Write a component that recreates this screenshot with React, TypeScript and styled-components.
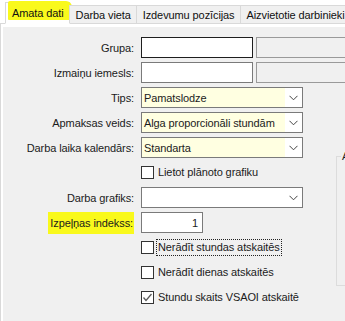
import React from 'react'
import styled, { createGlobalStyle } from 'styled-components'

const GlobalStyle = createGlobalStyle`
  html, body { margin: 0; padding: 0; background: #fff; }
  body {
    font-family: "Liberation Sans", Arial, sans-serif;
    font-size: 11px;
    letter-spacing: -0.1px;
    color: #1b1b1b;
  }
`

const Window = styled.div`
  width: 345px;
  height: 321px;
  overflow: hidden;
  background: #fff;
  display: flex;
  flex-direction: column;
`

const TabStrip = styled.div`
  height: 23px;
  display: flex;
  align-items: flex-end;
  padding-left: 6px;
  position: relative;
  z-index: 1;
`

const Tab = styled.div<{ $active?: boolean }>`
  position: relative;
  box-sizing: border-box;
  height: ${p => (p.$active ? '22px' : '18px')};
  margin-bottom: ${p => (p.$active ? '-1px' : '0')};
  padding: 0 5px 0 6px;
  display: flex;
  align-items: center;
  background: ${p => (p.$active ? '#fff' : '#f0f0f0')};
  border: 1px solid #d9d9d9;
  border-bottom: ${p => (p.$active ? '1px solid #fff' : 'none')};
  margin-left: -1px;
  white-space: nowrap;
  color: #111;
`

const TabMark = styled.span`
  position: absolute;
  left: 2px;
  right: -3px;
  top: -2px;
  bottom: 3px;
  background: #f9f91c;
  border-radius: 2px 6px 3px 1px;
`

const TabText = styled.span`
  position: relative;
`

const Page = styled.div`
  flex: 1;
  border-top: 1px solid #d9d9d9;
  border-left: 1px solid #d9d9d9;
  padding: 3px 0 0 2px;
  display: flex;
`

const Panel = styled.div`
  flex: 1;
  background: #f0f0f0;
  padding-top: 10px;
`

const Form = styled.div`
  display: grid;
  grid-template-columns: 131px 162px 1fr;
  grid-auto-rows: 21px;
  column-gap: 7px;
  row-gap: 4px;
  align-items: center;
`

const Label = styled.div`
  grid-column: 1;
  text-align: right;
  white-space: nowrap;
`

const Mark = styled.span`
  background: #f9f91c;
  padding: 5px 1px 5px 2px;
`

const Pair = styled.div`
  grid-column: 2 / -1;
  display: flex;
  gap: 3px;
  height: 21px;
`

const TextBox = styled.div<{ $dark?: boolean; $w?: number; $align?: string }>`
  grid-column: 2;
  box-sizing: border-box;
  height: 21px;
  width: ${p => (p.$w ? `${p.$w}px` : 'auto')};
  border: 1px solid ${p => (p.$dark ? '#1e1e1e' : '#7a7a7a')};
  background: #fff;
  padding: 0 4px;
  display: flex;
  align-items: center;
  justify-content: ${p => p.$align || 'flex-start'};
  flex-shrink: 0;
`

const DisabledBox = styled.div`
  box-sizing: border-box;
  height: 21px;
  width: 120px;
  flex-shrink: 0;
  border: 1px solid #9a9a9a;
  background: #f0f0f0;
`

const Select = styled.div`
  grid-column: 2;
  box-sizing: border-box;
  height: 21px;
  border: 1px solid #7a7a7a;
  background: #fff;
  display: flex;
`

const SelectValue = styled.div<{ $filled?: boolean }>`
  flex: 1;
  background: ${p => (p.$filled ? '#ffffe1' : '#fff')};
  padding-left: 2px;
  display: flex;
  align-items: center;
  white-space: nowrap;
  overflow: hidden;
`

const Arrow = styled.div`
  width: 17px;
  display: flex;
  align-items: center;
  justify-content: center;
`

const CheckRow = styled.label`
  grid-column: 2;
  display: flex;
  align-items: center;
  gap: 3px;
  white-space: nowrap;
`

const Box = styled.span`
  box-sizing: border-box;
  flex-shrink: 0;
  width: 13px;
  height: 13px;
  border: 1px solid #333;
  background: #fff;
  display: flex;
  align-items: center;
  justify-content: center;
`

const CheckText = styled.span<{ $focus?: boolean }>`
  padding: 0 1px;
  outline: ${p => (p.$focus ? '1px dotted #222' : 'none')};
  line-height: 15px;
`

const Group = styled.fieldset`
  grid-column: 3;
  grid-row: 5 / span 7;
  align-self: start;
  margin: 13px 0 0 26px;
  padding: 0;
  height: 136px;
  box-sizing: border-box;
  border: 1px solid #dcdcdc;
  border-right: none;
  min-width: 0;
`

const GroupTitle = styled.legend`
  margin-left: 4px;
  padding: 0 1px;
  color: #1b1b1b;
  white-space: nowrap;
`

const Chevron = () => (
  <svg width="9" height="6" viewBox="0 0 9 6">
    <polyline points="0.5,0.8 4.5,4.8 8.5,0.8" fill="none" stroke="#444" strokeWidth="1" />
  </svg>
)

const Tick = () => (
  <svg width="11" height="11" viewBox="0 0 11 11">
    <polyline points="1.5,5.5 4,8.5 9.5,2" fill="none" stroke="#5a5a5a" strokeWidth="1.3" />
  </svg>
)

const tabs = ['Amata dati', 'Darba vieta', 'Izdevumu pozīcijas', 'Aizvietotie darbinieki']

export default function App() {
  return (
    <Window>
      <GlobalStyle />
      <TabStrip>
        {tabs.map((t, i) => (
          <Tab key={t} $active={i === 0}>
            {i === 0 && <TabMark />}
            <TabText>{t}</TabText>
          </Tab>
        ))}
      </TabStrip>
      <Page>
        <Panel>
          <Form>
            <Label>Grupa:</Label>
            <Pair>
              <TextBox $dark $w={112} />
              <DisabledBox />
            </Pair>

            <Label>Izmaiņu iemesls:</Label>
            <Pair>
              <TextBox $w={112} />
              <DisabledBox />
            </Pair>

            <Label>Tips:</Label>
            <Select>
              <SelectValue $filled>Pamatslodze</SelectValue>
              <Arrow><Chevron /></Arrow>
            </Select>

            <Label>Apmaksas veids:</Label>
            <Select>
              <SelectValue $filled>Alga proporcionāli stundām</SelectValue>
              <Arrow><Chevron /></Arrow>
            </Select>

            <Label>Darba laika kalendārs:</Label>
            <Select>
              <SelectValue $filled>Standarta</SelectValue>
              <Arrow><Chevron /></Arrow>
            </Select>
            <Group>
              <GroupTitle>Atvaļinājumi</GroupTitle>
            </Group>

            <CheckRow>
              <Box />
              <CheckText>Lietot plānoto grafiku</CheckText>
            </CheckRow>

            <Label>Darba grafiks:</Label>
            <Select>
              <SelectValue />
              <Arrow><Chevron /></Arrow>
            </Select>

            <Label><Mark>Izpeļņas indekss:</Mark></Label>
            <TextBox $w={62} $align="flex-end">1</TextBox>

            <CheckRow>
              <Box />
              <CheckText $focus>Nerādīt stundas atskaitēs</CheckText>
            </CheckRow>
            <CheckRow>
              <Box />
              <CheckText>Nerādīt dienas atskaitēs</CheckText>
            </CheckRow>
            <CheckRow>
              <Box><Tick /></Box>
              <CheckText>Stundu skaits VSAOI atskaitē</CheckText>
            </CheckRow>
          </Form>
        </Panel>
      </Page>
    </Window>
  )
}
